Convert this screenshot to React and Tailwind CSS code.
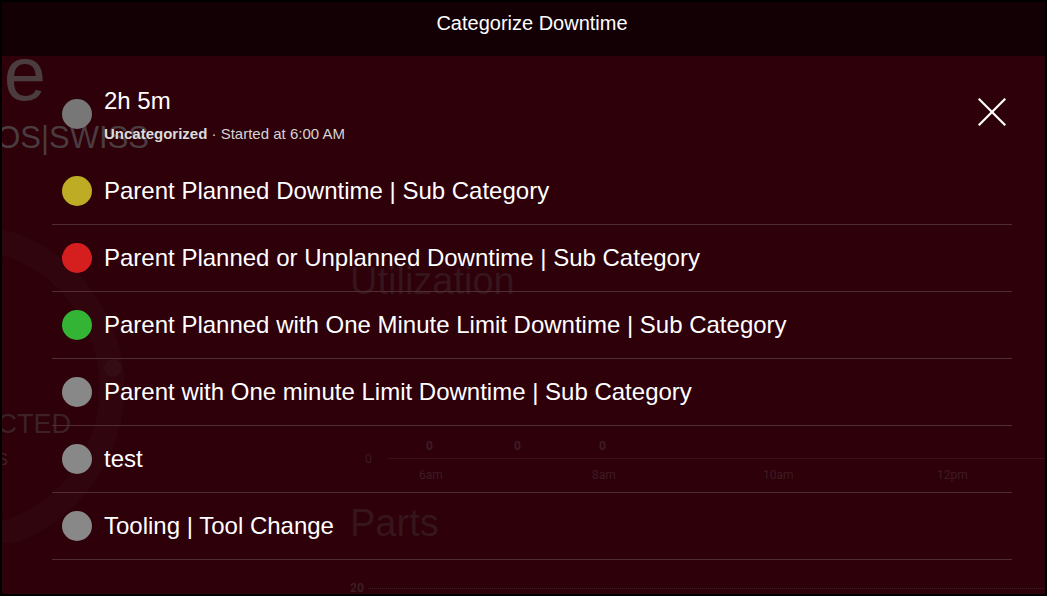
import React from 'react';

const categories = [
  { label: 'Parent Planned Downtime | Sub Category', color: 'bg-[#bead24]' },
  { label: 'Parent Planned or Unplanned Downtime | Sub Category', color: 'bg-[#d51f1f]' },
  { label: 'Parent Planned with One Minute Limit Downtime | Sub Category', color: 'bg-[#33b435]' },
  { label: 'Parent with One minute Limit Downtime | Sub Category', color: 'bg-[#888888]' },
  { label: 'test', color: 'bg-[#888888]' },
  { label: 'Tooling | Tool Change', color: 'bg-[#888888]' },
];

const Dashboard = () => (
  <div className="flex h-full">
    {/* left column, mostly hidden behind the dialog */}
    <div className="w-[348px] shrink-0 flex flex-col relative">
      <div className="shrink-0 flex justify-end w-[44px] mt-[-20px] whitespace-nowrap text-[76px] leading-none text-[#4a3c3f]">
        Machine
      </div>
      <div className="shrink-0 flex justify-end w-[147px] mt-[10px] whitespace-nowrap text-[31px] leading-none text-[#4a3c3f]">
        OS|SWISS
      </div>
      <div className="shrink-0 relative mt-[70px] h-[320px]">
        <svg className="absolute inset-0" width="348" height="320" viewBox="0 0 348 320">
          <circle cx="-42" cy="165" r="152" fill="none" stroke="#30050d" strokeWidth="25" />
          <circle cx="111" cy="145" r="9" fill="#330c14" />
        </svg>
        <div className="absolute left-0 top-[188px] flex justify-end w-[69px] whitespace-nowrap text-[27px] leading-none text-[#3c2227]">
          SELECTED
        </div>
        <div className="absolute left-0 top-[229px] flex justify-end w-[6px] whitespace-nowrap text-[16px] leading-none text-[#3c2227]">
          PARTS
        </div>
      </div>
    </div>

    {/* right column */}
    <div className="flex-1 flex flex-col">
      <div className="shrink-0 mt-[206px] text-[38px] leading-none text-[#36151c]">Utilization</div>
      <div className="shrink-0 relative mt-[130px] h-[55px] font-['Roboto',sans-serif] text-[12px] font-bold text-[#3d1d24]">
        <div className="absolute left-[76px] top-[7px]">0</div>
        <div className="absolute left-[164px] top-[7px]">0</div>
        <div className="absolute left-[249px] top-[7px]">0</div>
        <div className="absolute left-[15px] top-[20px] font-normal">0</div>
        <div className="absolute left-[38px] right-0 top-[28px] h-px bg-[#3a1119]" />
        <div className="absolute left-[69px] top-[36px] font-normal">6am</div>
        <div className="absolute left-[242px] top-[36px] font-normal">8am</div>
        <div className="absolute left-[413px] top-[36px] font-normal">10am</div>
        <div className="absolute left-[587px] top-[36px] font-normal">12pm</div>
      </div>
      <div className="shrink-0 mt-[19px] text-[38px] leading-none text-[#36151c]">Parts</div>
      <div className="shrink-0 mt-[37px] flex items-center gap-[4px]">
        <span className="font-['Roboto',sans-serif] text-[12px] font-bold text-[#3d1d24]">20</span>
        <div className="flex-1 border-t border-dotted border-[#3d1d24]" />
      </div>
    </div>
  </div>
);

const CloseIcon = () => (
  <svg width="28" height="28" viewBox="0 0 28 28" fill="none" stroke="white" strokeWidth="2.2" strokeLinecap="square">
    <line x1="1.5" y1="1.5" x2="26.5" y2="26.5" />
    <line x1="26.5" y1="1.5" x2="1.5" y2="26.5" />
  </svg>
);

export default function App() {
  return (
    <div className="w-[1047px] h-[596px] border-2 border-black flex flex-col overflow-hidden font-['Liberation_Sans',Arial,sans-serif]">
      <div className="h-[54px] shrink-0 bg-[#130004] flex justify-center pl-[17px] pt-[7px]">
        <h1 className="text-[20px] leading-[28px] text-white">Categorize Downtime</h1>
      </div>

      <div className="flex-1 relative bg-[#2d000a] overflow-hidden">
        <Dashboard />

        {/* dialog content over the dashboard */}
        <div className="absolute inset-0 pl-[50px]">
          <div className="w-[960px]">
            <div className="flex items-start pt-[31px] pb-[14px]">
              <div className="ml-[10px] mt-[12px] w-[30px] h-[30px] rounded-full bg-[#777777] shrink-0" />
              <div className="ml-[12px] flex-1 flex flex-col">
                <div className="text-[24px] leading-[28px] text-white">2h 5m</div>
                <div className="mt-[9px] text-[15px] leading-[20px] text-[#d4d4d4]">
                  <span className="font-bold text-[#dcdcdc]">Uncategorized</span> · Started at 6:00 AM
                </div>
              </div>
              <button className="mt-[11px] mr-[6px]">
                <CloseIcon />
              </button>
            </div>

            {categories.map((c) => (
              <div key={c.label} className="h-[67px] flex items-center border-b border-[#502c34]">
                <div className={`ml-[10px] w-[30px] h-[30px] rounded-full shrink-0 ${c.color}`} />
                <span className="ml-[12px] text-[24px] leading-[28px] text-white">{c.label}</span>
              </div>
            ))}
          </div>
        </div>
      </div>
    </div>
  );
}
